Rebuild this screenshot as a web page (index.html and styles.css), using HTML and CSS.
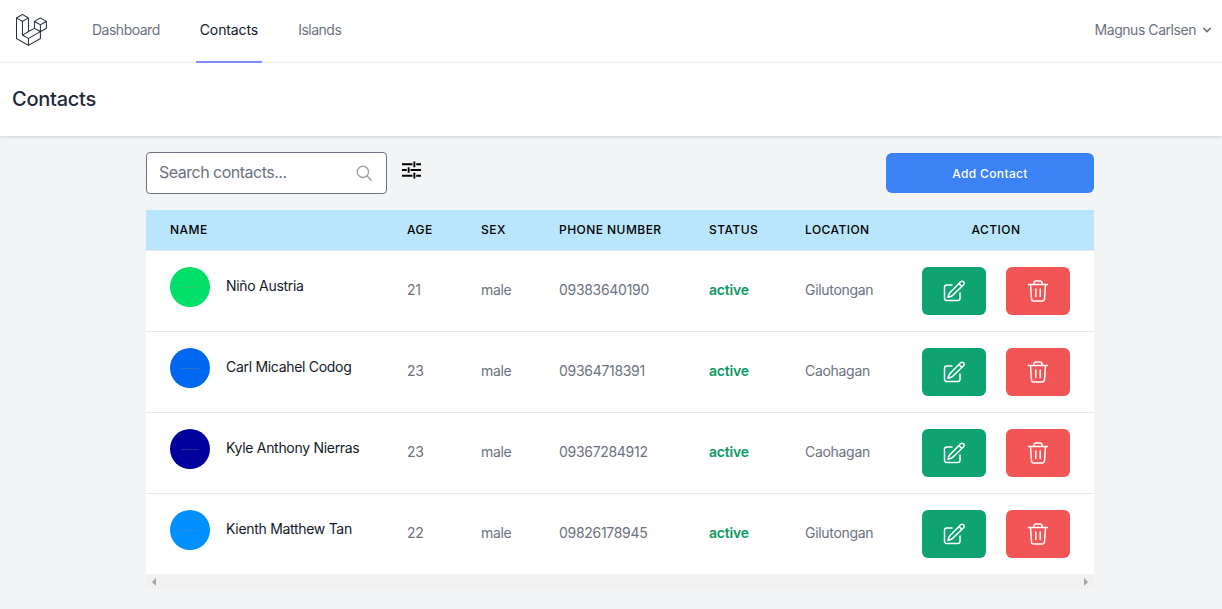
FILE: index.html
```html
<!DOCTYPE html>
<html lang="en">
<head>
  <meta charset="UTF-8" />
  <title>Contacts</title>
  <link rel="stylesheet" href="styles.css">
</head>
<body>

  <!-- Icons used in every row -->
  <svg class="defs">
    <symbol id="icon-edit" viewBox="0 0 24 24">
      <path d="M16.9 4.5l1.7-1.7a2.1 2.1 0 1 1 3 3L10.6 16.4a4.5 4.5 0 0 1-1.9 1.1l-2.7.8.8-2.7a4.5 4.5 0 0 1 1.1-1.900zM16.900 4.500l2.600 2.600M18 14v5.200a2.300 2.300 0 0 1-2.300 2.300H4.800a2.300 2.300 0 0 1-2.300-2.300V8.300A2.300 2.300 0 0 1 4.800 6H10"/>
    </symbol>
    <symbol id="icon-trash" viewBox="0 0 24 24">
      <path d="M2.500 5.500h19M8 5.500V4a2 2 0 0 1 2-2h4a2 2 0 0 1 2 2v1.500M4.500 5.500l1 14.200A2.300 2.300 0 0 0 7.800 22h8.400a2.300 2.300 0 0 0 2.300-2.300l1-14.200M9.800 10v7.500M14.200 10v7.500"/>
    </symbol>
  </svg>

  <!-- Top nav -->
  <nav class="topnav">
    <div class="nav-left">
      <svg class="logo" viewBox="0 0 316 316" fill="#1f2937">
        <path d="M305.8 81.125C305.77 80.995 305.69 80.885 305.65 80.755C305.56 80.525 305.49 80.285 305.37 80.075C305.29 79.935 305.17 79.815 305.07 79.685C304.94 79.515 304.83 79.325 304.68 79.175C304.55 79.045 304.39 78.955 304.25 78.845C304.09 78.715 303.95 78.575 303.77 78.475L251.32 48.275C249.97 47.495 248.31 47.495 246.96 48.275L194.51 78.475C194.33 78.575 194.19 78.725 194.03 78.845C193.89 78.955 193.73 79.045 193.6 79.175C193.45 79.325 193.34 79.515 193.21 79.685C193.11 79.815 192.99 79.935 192.91 80.075C192.79 80.295 192.71 80.535 192.63 80.755C192.58 80.875 192.51 80.995 192.48 81.125C192.38 81.495 192.33 81.875 192.33 82.265V139.625L148.62 164.795V52.575C148.62 52.185 148.57 51.805 148.47 51.435C148.44 51.305 148.36 51.195 148.32 51.065C148.23 50.835 148.16 50.595 148.04 50.385C147.96 50.245 147.84 50.125 147.74 49.995C147.61 49.825 147.5 49.635 147.35 49.485C147.22 49.355 147.06 49.265 146.92 49.155C146.76 49.025 146.62 48.885 146.44 48.785L93.99 18.585C92.64 17.805 90.98 17.805 89.63 18.585L37.18 48.785C37 48.885 36.86 49.035 36.7 49.155C36.56 49.265 36.4 49.355 36.27 49.485C36.12 49.635 36.01 49.825 35.88 49.995C35.78 50.125 35.66 50.245 35.58 50.385C35.46 50.605 35.38 50.845 35.3 51.065C35.25 51.185 35.18 51.305 35.15 51.435C35.05 51.805 35 52.185 35 52.575V232.235C35 233.795 35.84 235.245 37.19 236.025L142.1 296.425C142.33 296.555 142.58 296.635 142.83 296.725C142.95 296.765 143.06 296.835 143.18 296.865C143.55 296.965 143.93 297.015 144.31 297.015C144.69 297.015 145.07 296.965 145.44 296.865C145.55 296.835 145.65 296.775 145.76 296.735C146.02 296.645 146.28 296.565 146.52 296.425L251.43 236.025C252.78 235.245 253.62 233.805 253.62 232.235V174.875L303.88 145.935C305.24 145.155 306.08 143.715 306.08 142.145V82.265C305.94 81.875 305.89 81.495 305.8 81.125ZM144.2 227.205L100.57 202.515L146.39 176.135L196.66 147.195L240.33 172.335L208.29 190.625L144.2 227.205ZM244.75 114.995V164.795L226.39 154.225L201.03 139.625V89.825L219.39 100.395L244.75 114.995ZM249.12 57.105L292.81 82.265L249.12 107.425L205.43 82.265L249.12 57.105ZM114.49 184.425L96.13 194.995V85.305L121.49 70.705L139.85 60.135V169.815L114.49 184.425ZM91.76 27.425L135.45 52.585L91.76 77.745L48.07 52.585L91.76 27.425ZM43.67 60.135L62.03 70.705L87.39 85.305V202.545V202.555V202.565C87.39 202.735 87.44 202.895 87.46 203.055C87.49 203.265 87.49 203.485 87.55 203.695V203.705C87.6 203.875 87.69 204.035 87.76 204.195C87.84 204.375 87.89 204.575 87.99 204.745C87.99 204.745 87.99 204.755 88 204.755C88.09 204.905 88.22 205.035 88.33 205.175C88.45 205.335 88.55 205.495 88.69 205.635L88.7 205.645C88.82 205.765 88.98 205.855 89.12 205.965C89.28 206.085 89.42 206.225 89.59 206.325C89.6 206.325 89.6 206.325 89.61 206.335C89.62 206.335 89.62 206.345 89.63 206.345L139.87 234.775V285.065L43.67 229.705V60.135ZM244.75 229.705L148.58 285.075V234.775L219.8 194.115L244.75 179.875V229.705ZM297.2 139.625L253.49 164.795V114.995L278.85 100.395L297.21 89.825V139.625H297.2Z"/>
      </svg>
      <a class="nav-link dash" href="#">Dashboard</a>
      <a class="nav-link active" href="#">Contacts</a>
      <a class="nav-link isl" href="#">Islands</a>
    </div>
    <div class="nav-user">
      Magnus Carlsen
      <svg class="chevron" viewBox="0 0 20 20" fill="currentColor"><path d="M5.3 7.3a1 1 0 0 1 1.4 0L10 10.600l3.300-3.300a1 1 0 1 1 1.400 1.400l-4 4a1 1 0 0 1-1.400 0l-4-4a1 1 0 0 1 0-1.400z"/></svg>
    </div>
  </nav>

  <header class="page-header">
    <h2>Contacts</h2>
  </header>

  <main class="content">
    <div class="toolbar">
      <div class="search-box">
        <input type="text" placeholder="Search contacts...">
        <svg class="search-icon" viewBox="0 0 24 24" fill="none" stroke="#9ca3af" stroke-width="1.900" stroke-linecap="round"><circle cx="10.500" cy="10.500" r="7.500"/><path d="M16 16l5.500 5.500"/></svg>
      </div>
      <svg class="filter-icon" viewBox="0 0 20 18" fill="none" stroke="#000" stroke-width="2">
        <path d="M0 3h11M15 3h5M13 0v6M0 9h5M9 9h11M7 6v6M0 15h11M15 15h5M13 12v6"/>
      </svg>
      <button class="add-btn">Add Contact</button>
    </div>

    <div class="table-wrap">
      <table>
        <thead>
          <tr>
            <th class="col-name">Name</th>
            <th class="col-age">Age</th>
            <th class="col-sex">Sex</th>
            <th class="col-phone">Phone Number</th>
            <th class="col-status">Status</th>
            <th class="col-location">Location</th>
            <th class="col-action">Action</th>
          </tr>
        </thead>
        <tbody>
          <tr>
            <td class="name-cell"><div class="person"><span class="avatar green"></span><span class="person-name">Niño Austria</span></div></td>
            <td>21</td>
            <td>male</td>
            <td>09383640190</td>
            <td class="status">active</td>
            <td>Gilutongan</td>
            <td class="action-cell"><div class="actions">
              <button class="icon-btn edit"><svg><use href="#icon-edit"/></svg></button>
              <button class="icon-btn del"><svg><use href="#icon-trash"/></svg></button>
            </div></td>
          </tr>
          <tr>
            <td class="name-cell"><div class="person"><span class="avatar blue"></span><span class="person-name">Carl Micahel Codog</span></div></td>
            <td>23</td>
            <td>male</td>
            <td>09364718391</td>
            <td class="status">active</td>
            <td>Caohagan</td>
            <td class="action-cell"><div class="actions">
              <button class="icon-btn edit"><svg><use href="#icon-edit"/></svg></button>
              <button class="icon-btn del"><svg><use href="#icon-trash"/></svg></button>
            </div></td>
          </tr>
          <tr>
            <td class="name-cell"><div class="person"><span class="avatar navy"></span><span class="person-name">Kyle Anthony Nierras</span></div></td>
            <td>23</td>
            <td>male</td>
            <td>09367284912</td>
            <td class="status">active</td>
            <td>Caohagan</td>
            <td class="action-cell"><div class="actions">
              <button class="icon-btn edit"><svg><use href="#icon-edit"/></svg></button>
              <button class="icon-btn del"><svg><use href="#icon-trash"/></svg></button>
            </div></td>
          </tr>
          <tr>
            <td class="name-cell"><div class="person"><span class="avatar sky"></span><span class="person-name">Kienth Matthew Tan</span></div></td>
            <td>22</td>
            <td>male</td>
            <td>09826178945</td>
            <td class="status">active</td>
            <td>Gilutongan</td>
            <td class="action-cell"><div class="actions">
              <button class="icon-btn edit"><svg><use href="#icon-edit"/></svg></button>
              <button class="icon-btn del"><svg><use href="#icon-trash"/></svg></button>
            </div></td>
          </tr>
        </tbody>
      </table>
      <div class="scrollbar">
        <span class="arrow-left"></span>
        <span class="arrow-right"></span>
      </div>
    </div>
  </main>
</body>
</html>
```
FILE: styles.css
```css
* {
  box-sizing: border-box;
}

body {
  margin: 0;
  font-family: Inter, "Noto Sans", sans-serif;
  font-size: 14px;
  background-color: #f3f4f6;
  overflow: hidden;
}

.defs {
  display: none;
}

/* nav */
.topnav {
  height: 63px;
  display: flex;
  justify-content: space-between;
  background-color: #fff;
  border-bottom: 1px solid #f3f4f6;
  padding: 0 7px 0 12px;
}

.nav-left {
  display: flex;
}

.logo {
  width: 36px;
  height: 36px;
  margin-top: 12px;
  margin-right: 40px;
}

.nav-link {
  display: flex;
  align-items: center;
  height: 63px;
  padding: 0 4px 3px;
  margin-right: 32px;
  color: #6b7280;
  text-decoration: none;
  border-bottom: 2px solid transparent;
}

.nav-link.dash {
  letter-spacing: -0.5px;
}

.nav-link.isl {
  letter-spacing: -0.5px;
}

.nav-link.active {
  color: #111827;
  border-bottom-color: #818cf8;
  letter-spacing: -0.1px;
}

.nav-user {
  display: flex;
  align-items: center;
  height: 59px;
  color: #6b7280;
  letter-spacing: -0.45px;
}

.chevron {
  width: 16px;
  height: 16px;
  margin-left: 3px;
}

/* header */
.page-header {
  height: 73px;
  padding: 24px 12px;
  background-color: #fff;
  box-shadow: 0 1px 3px rgba(0,0,0,0.15);
}

.page-header h2 {
  margin: 0;
  font-size: 20px;
  line-height: 24px;
  font-weight: 500;
  letter-spacing: -0.25px;
  color: #1f2937;
}

/* main */
.content {
  width: 948px;
  margin-left: 146px;
  padding-top: 16px;
}

.toolbar {
  display: flex;
  align-items: center;
  height: 42px;
  margin-bottom: 16px;
}

.search-box {
  width: 241px;
  height: 42px;
  display: flex;
  align-items: center;
  padding: 0 13px 0 12px;
  background-color: #fff;
  border: 1px solid #6b7280;
  border-radius: 4px;
}

.search-box input {
  flex: 1;
  min-width: 0;
  height: 22px;
  margin-bottom: 2px;
  border: none;
  outline: none;
  padding: 0;
  font-family: inherit;
  font-size: 16px;
  letter-spacing: -0.5px;
}

.search-box input::placeholder {
  color: #6b7280;
}

.search-icon {
  width: 18px;
  height: 18px;
}

.filter-icon {
  width: 19px;
  height: 18px;
  margin-left: 15px;
  margin-bottom: 6px;
}

.add-btn {
  width: 208px;
  height: 40px;
  margin-left: auto;
  border: none;
  border-radius: 6px;
  background-color: #3b82f6;
  color: #fff;
  font-family: inherit;
  font-size: 12px;
  font-weight: 500;
  letter-spacing: 0.35px;
}

/* table */
.table-wrap {
  background-color: #fff;
}

table {
  width: 948px;
  table-layout: fixed;
  border-collapse: separate;
  border-spacing: 0;
}

th {
  height: 41px;
  padding: 0 24px 2px;
  background-color: #bae6fd;
  border-bottom: 1px solid #e5e7eb;
  color: #000;
  font-size: 12px;
  font-weight: 500;
  letter-spacing: 0.45px;
  text-align: left;
  text-transform: uppercase;
  white-space: nowrap;
}

.col-name { width: 237px; }
.col-age { width: 74px; }
.col-sex { width: 78px; }
.col-phone { width: 150px; }
.col-status { width: 96px; }
.col-location { width: 117px; }
.col-action { width: 196px; text-align: center; }

td {
  height: 81px;
  padding: 0 24px 4px;
  border-bottom: 1px solid #e5e7eb;
  color: #6b7280;
  white-space: nowrap;
  letter-spacing: -0.3px;
}

tbody tr:last-child td {
  border-bottom: none;
  height: 80px;
}

.name-cell,
.action-cell {
  padding-top: 16px;
  padding-bottom: 0;
  vertical-align: top;
}

.name-cell {
  color: #111827;
}

.person {
  display: flex;
  align-items: center;
  gap: 16px;
}

.person-name {
  margin-bottom: 4px;
}

.avatar {
  width: 40px;
  height: 40px;
  flex-shrink: 0;
  display: flex;
  align-items: center;
  justify-content: center;
  border-radius: 50%;
}

/* the unreadable speck of text in the avatar pictures */
.avatar::after {
  content: "";
  width: 18px;
  height: 1px;
  background-color: rgba(140,140,140,0.3);
}

.green { background-color: #00e068; }
.blue { background-color: #0068f0; }
.navy { background-color: #00009c; }
.sky { background-color: #0090ff; }

.status {
  color: #0e9a63;
  font-weight: 600;
  letter-spacing: -0.2px;
}

.actions {
  display: flex;
  gap: 20px;
}

.icon-btn {
  width: 64px;
  height: 48px;
  padding: 0;
  display: flex;
  align-items: center;
  justify-content: center;
  border: none;
  border-radius: 6px;
  color: #fff;
}

.icon-btn svg {
  width: 24px;
  height: 24px;
  fill: none;
  stroke: currentColor;
  stroke-width: 1.5;
  stroke-linecap: round;
  stroke-linejoin: round;
}

.edit {
  background-color: #0ea371;
}

.del {
  background-color: #f25555;
}

/* horizontal scrollbar */
.scrollbar {
  height: 15px;
  display: flex;
  align-items: center;
  justify-content: space-between;
  padding: 0 6px;
  background-color: #f1f1f1;
}

.arrow-left {
  border: 4px solid transparent;
  border-left-width: 0;
  border-right-color: #a3a3a3;
}

.arrow-right {
  border: 4px solid transparent;
  border-right-width: 0;
  border-left-color: #a3a3a3;
}
```
